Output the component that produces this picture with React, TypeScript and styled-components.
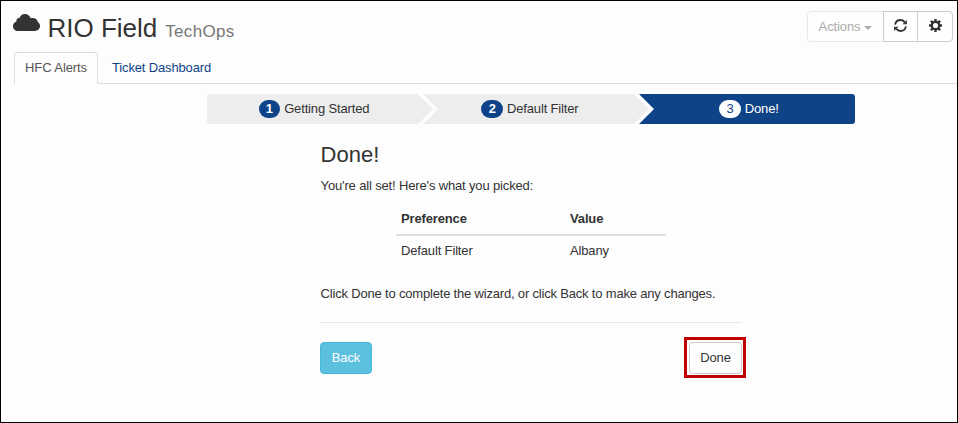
import React from "react";
import styled, { createGlobalStyle, css } from "styled-components";

const Global = createGlobalStyle`
  *, *::before, *::after { box-sizing: border-box; }
  body {
    margin: 0;
    font-family: "Liberation Sans", Arial, sans-serif;
    font-size: 13px;
    line-height: 18px;
    letter-spacing: -0.15px;
    color: #333;
    background: #fdfdfd;
  }
`;

const Frame = styled.div`
  height: 423px;
  border: 1px solid #000;
  background: #fdfdfd;
  overflow: hidden;
`;

const Header = styled.header`
  display: flex;
  justify-content: space-between;
  align-items: flex-start;
  height: 51px;
  padding: 10px 4px 0 12px;
`;

const Brand = styled.h1`
  display: flex;
  align-items: baseline;
  margin: 2px 0 0;
  font-size: 26px;
  line-height: 30px;
  font-weight: 400;
  letter-spacing: 0;
  white-space: nowrap;
`;

const BrandCloud = styled.svg`
  width: 27px;
  height: 17px;
  margin-right: 7.5px;
  align-self: flex-start;
  margin-top: 1px;
  fill: #333;
`;

const BrandSub = styled.small`
  margin-left: 8px;
  font-size: 17px;
  letter-spacing: 0.3px;
  color: #777;
`;

const ButtonGroup = styled.div`
  display: flex;
`;

const Button = styled.button<{ $info?: boolean; $width?: number }>`
  width: ${(p) => p.$width}px;
  height: 32px;
  padding: 0;
  border: 1px solid ${(p) => (p.$info ? "#46b8da" : "#ccc")};
  border-radius: 4px;
  background: ${(p) => (p.$info ? "#5bc0de" : "#fefefe")};
  color: ${(p) => (p.$info ? "#fff" : "#333")};
  font: inherit;
  letter-spacing: inherit;
`;

const ToolButton = styled(Button)<{ $muted?: boolean }>`
  display: flex;
  align-items: center;
  justify-content: center;
  height: 31px;
  margin-left: -1px;
  border-radius: 0;
  &:first-child { border-radius: 4px 0 0 4px; margin-left: 0; }
  &:last-child { border-radius: 0 4px 4px 0; }
  ${(p) => p.$muted && css`color: #aaa; border-color: #e8e8e8; letter-spacing: -0.12px;`}
`;

const Caret = styled.span`
  margin: 2px 0 0 4px;
  border: 4px solid transparent;
  border-top-color: currentColor;
  border-bottom: 0;
`;

const Glyph = styled.svg`
  width: 13px;
  height: 13px;
  margin-top: -2px;
`;

const Tabs = styled.nav`
  display: flex;
  height: 32px;
  margin-left: 13px;
  border-bottom: 1px solid #ddd;
`;

const Tab = styled.a<{ $active?: boolean }>`
  height: 32px;
  padding: 6px 10px 0;
  margin-right: 3px;
  border: 1px solid transparent;
  border-radius: 4px 4px 0 0;
  color: #0f4388;
  ${(p) => p.$active && css`
    width: 84px;
    padding-right: 0;
    letter-spacing: -0.08px;
    color: #555;
    border-color: #ddd;
    border-bottom-color: #fdfdfd;
    background: #fdfdfd;
  `}
`;

const Steps = styled.ol`
  display: flex;
  width: 648px;
  height: 30px;
  margin: 10px 0 0 206px;
  padding: 0;
  list-style: none;
`;

const shapes = {
  first: "polygon(0 0, 211px 0, 226px 50%, 211px 100%, 0 100%)",
  middle: "polygon(0 0, 211px 0, 226px 50%, 211px 100%, 0 100%, 15px 50%)",
  last: "polygon(0 0, 100% 0, 100% 100%, 0 100%, 15px 50%)",
};

const insets = { first: "0 12px 0 0", middle: "0 12px 0 0", last: "0 0 0 4px" };
const corners = { first: "3px 0 0 3px", middle: "0", last: "0 3px 3px 0" };

const Step = styled.li<{ $shape: keyof typeof shapes; $active?: boolean }>`
  display: flex;
  align-items: center;
  justify-content: center;
  flex: none;
  width: ${(p) => (p.$shape === "last" ? 216 : 226)}px;
  margin-right: ${(p) => (p.$shape === "last" ? 0 : -10)}px;
  padding: ${(p) => insets[p.$shape]};
  border-radius: ${(p) => corners[p.$shape]};
  clip-path: ${(p) => shapes[p.$shape]};
  background: ${(p) => (p.$active ? "#0f4388" : "#ededed")};
  color: ${(p) => (p.$active ? "#fff" : "#333")};
`;

const StepNumber = styled.span<{ $active?: boolean }>`
  width: 21.5px;
  height: 18px;
  margin-right: 4px;
  border-radius: 9px;
  text-align: center;
  font-size: 13px;
  font-weight: ${(p) => (p.$active ? 400 : 700)};
  line-height: 17px;
  background: ${(p) => (p.$active ? "#fff" : "#0f4388")};
  color: ${(p) => (p.$active ? "#0f4388" : "#fff")};
`;

const Panel = styled.main`
  width: 422px;
  margin-left: 319px;
  padding-top: 18px;
`;

const Heading = styled.h3`
  margin: 0 0 10px;
  padding-left: 0.6px;
  font-size: 22px;
  line-height: 25px;
  font-weight: 400;
  letter-spacing: 0;
`;

const Text = styled.p`
  margin: 0;
  padding-left: 0.6px;
  line-height: 18px;
  white-space: nowrap;
`;

const Table = styled.table`
  width: 270px;
  margin: 8px 0 0 76px;
  border-collapse: collapse;
  table-layout: fixed;
`;

const HeadCell = styled.th<{ $width?: number }>`
  width: ${(p) => (p.$width ? `${p.$width}px` : "auto")};
  height: 32px;
  padding: 0 5px;
  text-align: left;
  border-bottom: 2px solid #ddd;
`;

const Cell = styled.td`
  height: 29px;
  padding: 1px 5px 0;
`;

const Closing = styled(Text)`
  margin-top: 21px;
  letter-spacing: -0.185px;
`;

const Rule = styled.hr`
  height: 1px;
  margin: 19px 0;
  border: 0;
  background: #e8e8e8;
`;

const Actions = styled.div`
  display: flex;
  justify-content: space-between;
`;

const Highlight = styled.div`
  display: flex;
  margin: -5px -4px -4px;
  padding: 2px 1px 1px 2px;
  border: 3px solid #c00000;
`;

export default function App() {
  return (
    <>
      <Global />
      <Frame>
        <Header>
          <Brand>
            <BrandCloud viewBox="0 0 26 17" preserveAspectRatio="none">
              <path d="M5 17C2 17 0 14.9 0 12.2 0 9.9 1.3 8.2 3.3 7.5 2.9 5.1 4.6 3.8 6.2 4.1 7 1.6 9 0 11.5 0 14.2 0 16.2 1.6 17 4.3 20.6 3.2 23.6 5.1 23.9 8.1 25.3 9 26 10.4 26 12.1 26 14.8 23.8 17 21 17Z" />
            </BrandCloud>
            RIO Field <BrandSub>TechOps</BrandSub>
          </Brand>
          <ButtonGroup>
            <ToolButton $width={77} $muted>Actions<Caret /></ToolButton>
            <ToolButton $width={35} aria-label="Refresh">
              <Glyph viewBox="0 0 13 13" fill="none" stroke="#333" strokeWidth="1.8">
                <path d="M1.1 5.6C1.6 2.8 3.8 1 6.5 1c1.7 0 3.2.8 4.2 2.1M11.9 7.4c-.5 2.8-2.7 4.6-5.4 4.6-1.7 0-3.2-.8-4.2-2.1" />
                <path d="M12.9.9v4.4H8.5zM.1 12.1V7.7h4.4z" fill="#333" stroke="none" />
              </Glyph>
            </ToolButton>
            <ToolButton $width={36} aria-label="Settings">
              <Glyph viewBox="0 0 13 13" fill="none" stroke="#333">
                <circle cx="6.5" cy="6.5" r="3.7" strokeWidth="2.3" />
                <path d="M6.5 0v2.5M6.5 10.5V13M0 6.5h2.5M10.5 6.5H13M1.9 1.9l1.8 1.8M9.3 9.3l1.8 1.8M11.1 1.9L9.3 3.7M3.7 9.3l-1.8 1.8" strokeWidth="2.4" />
              </Glyph>
            </ToolButton>
          </ButtonGroup>
        </Header>
        <Tabs>
          <Tab $active>HFC Alerts</Tab>
          <Tab>Ticket Dashboard</Tab>
        </Tabs>
        <Steps>
          <Step $shape="first"><StepNumber>1</StepNumber>Getting Started</Step>
          <Step $shape="middle"><StepNumber>2</StepNumber>Default Filter</Step>
          <Step $shape="last" $active><StepNumber $active>3</StepNumber>Done!</Step>
        </Steps>
        <Panel>
          <Heading>Done!</Heading>
          <Text>You're all set! Here's what you picked:</Text>
          <Table>
            <thead>
              <tr><HeadCell $width={169}>Preference</HeadCell><HeadCell>Value</HeadCell></tr>
            </thead>
            <tbody>
              <tr><Cell>Default Filter</Cell><Cell>Albany</Cell></tr>
            </tbody>
          </Table>
          <Closing>Click Done to complete the wizard, or click Back to make any changes.</Closing>
          <Rule />
          <Actions>
            <Button $info $width={52}>Back</Button>
            <Highlight><Button $width={53}>Done</Button></Highlight>
          </Actions>
        </Panel>
      </Frame>
    </>
  );
}
